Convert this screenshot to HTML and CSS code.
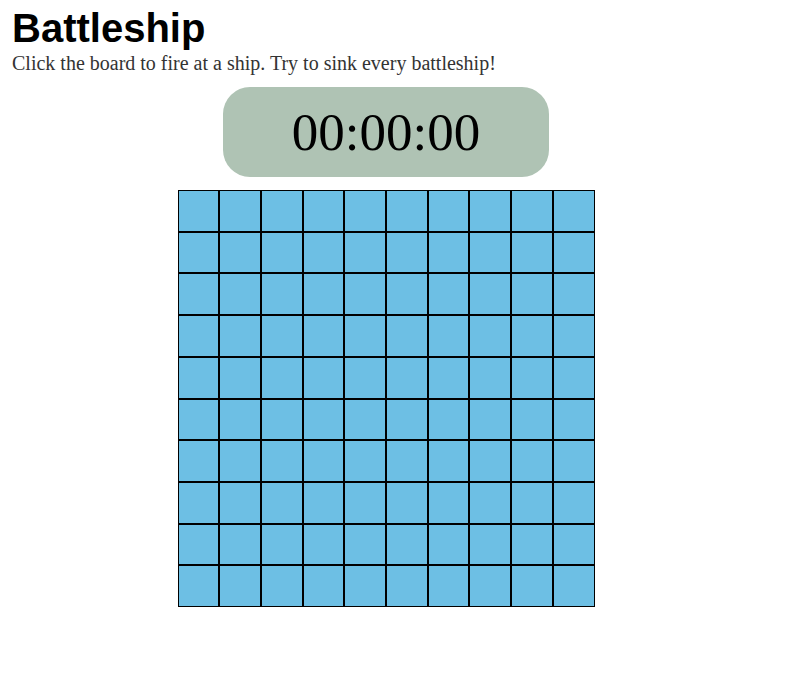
FILE: index.html
```html
<!DOCTYPE html>
<html lang="en">
<head>
<meta charset="utf-8">
<meta name="viewport" content="width=device-width, initial-scale=1">
<title>Battleship</title>
<link rel="stylesheet" href="styles.css">
</head>
<body>
<header class="intro">
<h1 class="title">Battleship</h1>
<p class="hint">Click the board to fire at a ship. Try to sink every battleship!</p>
</header>
<main class="game">
<div class="timer" role="timer">00:00:00</div>
<div class="board" id="board"></div>
</main>
<script src="board.js"></script>
</body>
</html>
```
FILE: styles.css
```css
* {
  box-sizing: border-box;
}

body {
  margin: 0;
  padding: 5px 16px 16px 0;
  background: #fff;
  color: #000;
  font-family: "Liberation Serif", "Times New Roman", serif;
}

.intro {
  padding-left: 12px;
}

.title {
  margin: 0;
  font-family: "Liberation Sans", Arial, sans-serif;
  font-size: 40px;
  line-height: 46px;
}

.hint {
  margin: 0;
  color: #333;
  font-size: 20px;
  line-height: 24px;
}

.game {
  display: flex;
  flex-direction: column;
  align-items: center;
  gap: 13px;
  margin-top: 12px;
}

.timer {
  width: 100%;
  max-width: 326px;
  padding: 15px 0;
  border-radius: 27px;
  background: #afc3b4;
  font-size: 53px;
  line-height: 60px;
  text-align: center;
}

.board {
  display: grid;
  grid-template: repeat(10, 1fr) / repeat(10, 1fr);
  width: 100%;
  max-width: 417px;
  aspect-ratio: 1;
}

.cell {
  min-width: 0;
  margin: 0;
  padding: 0;
  border: 1px solid #000;
  border-radius: 0;
  background: #6dbfe4;
  cursor: pointer;
}
```
FILE: board.js
```js
const board = document.getElementById("board");

for (let row = 1; row <= 10; row++) {
  for (let column = 1; column <= 10; column++) {
    const cell = document.createElement("button");
    cell.type = "button";
    cell.className = "cell";
    cell.setAttribute("aria-label", `Row ${row}, column ${column}`);
    board.append(cell);
  }
}
```
